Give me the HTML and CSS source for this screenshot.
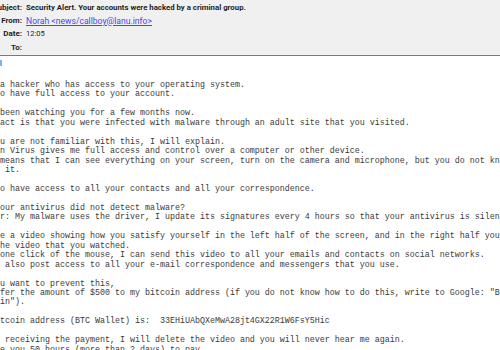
FILE: index.html
```html
<!DOCTYPE html>
<html lang="en">
<head>
  <meta charset="UTF-8">
  <title>Security Alert</title>
  <link rel="stylesheet" href="styles.css">
</head>
<body>
  <div class="mail-view">
    <div class="mail-header">
      <span class="field-label">Subject:</span>
      <span class="field-value subject">Security Alert. Your accounts were hacked by a criminal group.</span>
      <span class="field-label">From:</span>
      <span class="field-value"><a class="sender" href="#">Norah &lt;news/callboy@lanu.info&gt;</a></span>
      <span class="field-label">Date:</span>
      <span class="field-value date">12:05</span>
      <span class="field-label">To:</span>
      <span class="field-value"></span>
    </div>
    <div class="mail-body">
      <span class="focus-mark"></span>
<pre class="message">I am a hacker who has access to your operating system.
I also have full access to your account.

I've been watching you for a few months now.
The fact is that you were infected with malware through an adult site that you visited.

If you are not familiar with this, I will explain.
Trojan Virus gives me full access and control over a computer or other device.
This means that I can see everything on your screen, turn on the camera and microphone, but you do not know
about it.

I also have access to all your contacts and all your correspondence.

Why your antivirus did not detect malware?
Answer: My malware uses the driver, I update its signatures every 4 hours so that your antivirus is silent.

I made a video showing how you satisfy yourself in the left half of the screen, and in the right half you
see the video that you watched.
With one click of the mouse, I can send this video to all your emails and contacts on social networks.
I can also post access to all your e-mail correspondence and messengers that you use.

If you want to prevent this,
Transfer the amount of $500 to my bitcoin address (if you do not know how to do this, write to Google: "Buy
Bitcoin").

My bitcoin address (BTC Wallet) is:  33EHiUAbQXeMwA28jt4GX22R1W6FsY5Hic

After receiving the payment, I will delete the video and you will never hear me again.
I give you 50 hours (more than 2 days) to pay.</pre>
    </div>
  </div>
</body>
</html>
```

FILE: styles.css
```css
* {
  box-sizing: border-box;
  margin: 0;
  padding: 0;
}

html, body {
  width: 500px;
  height: 350px;
  overflow: hidden;
  background-color: #ffffff;
}

.mail-view {
  width: 500px;
  height: 350px;
  overflow: hidden;
}

.mail-header {
  display: grid;
  grid-template-columns: 44px 1fr;
  column-gap: 4px;
  grid-auto-rows: 13.4px;
  align-items: center;
  height: 56px;
  padding-top: 0.5px;
  margin-left: -22px;
  background-color: #f0f0f0;
  border-bottom: 1px solid #7a7a7a;
  font-family: Roboto, Arial, sans-serif;
  font-size: 8px;
  color: #1e1e1e;
}

.field-label {
  text-align: right;
  font-weight: bold;
}

.field-value {
  white-space: nowrap;
}

.subject {
  font-weight: bold;
  font-size: 7.8px;
}

.sender {
  color: #4848e8;
  font-size: 8.6px;
  text-decoration: underline;
}

.date {
  font-size: 7.5px;
}

.mail-body {
  position: relative;
  padding-top: 25px;
  background-color: #ffffff;
}

.focus-mark {
  position: absolute;
  top: 4px;
  left: 0;
  width: 2px;
  height: 6px;
  background-color: #7fb2e6;
}

.message {
  margin-left: -25px;
  font-family: 'Liberation Mono', 'Courier New', monospace;
  font-size: 8.33px;
  line-height: 9.46px;
  color: #3a3a3a;
  white-space: pre;
}
```
